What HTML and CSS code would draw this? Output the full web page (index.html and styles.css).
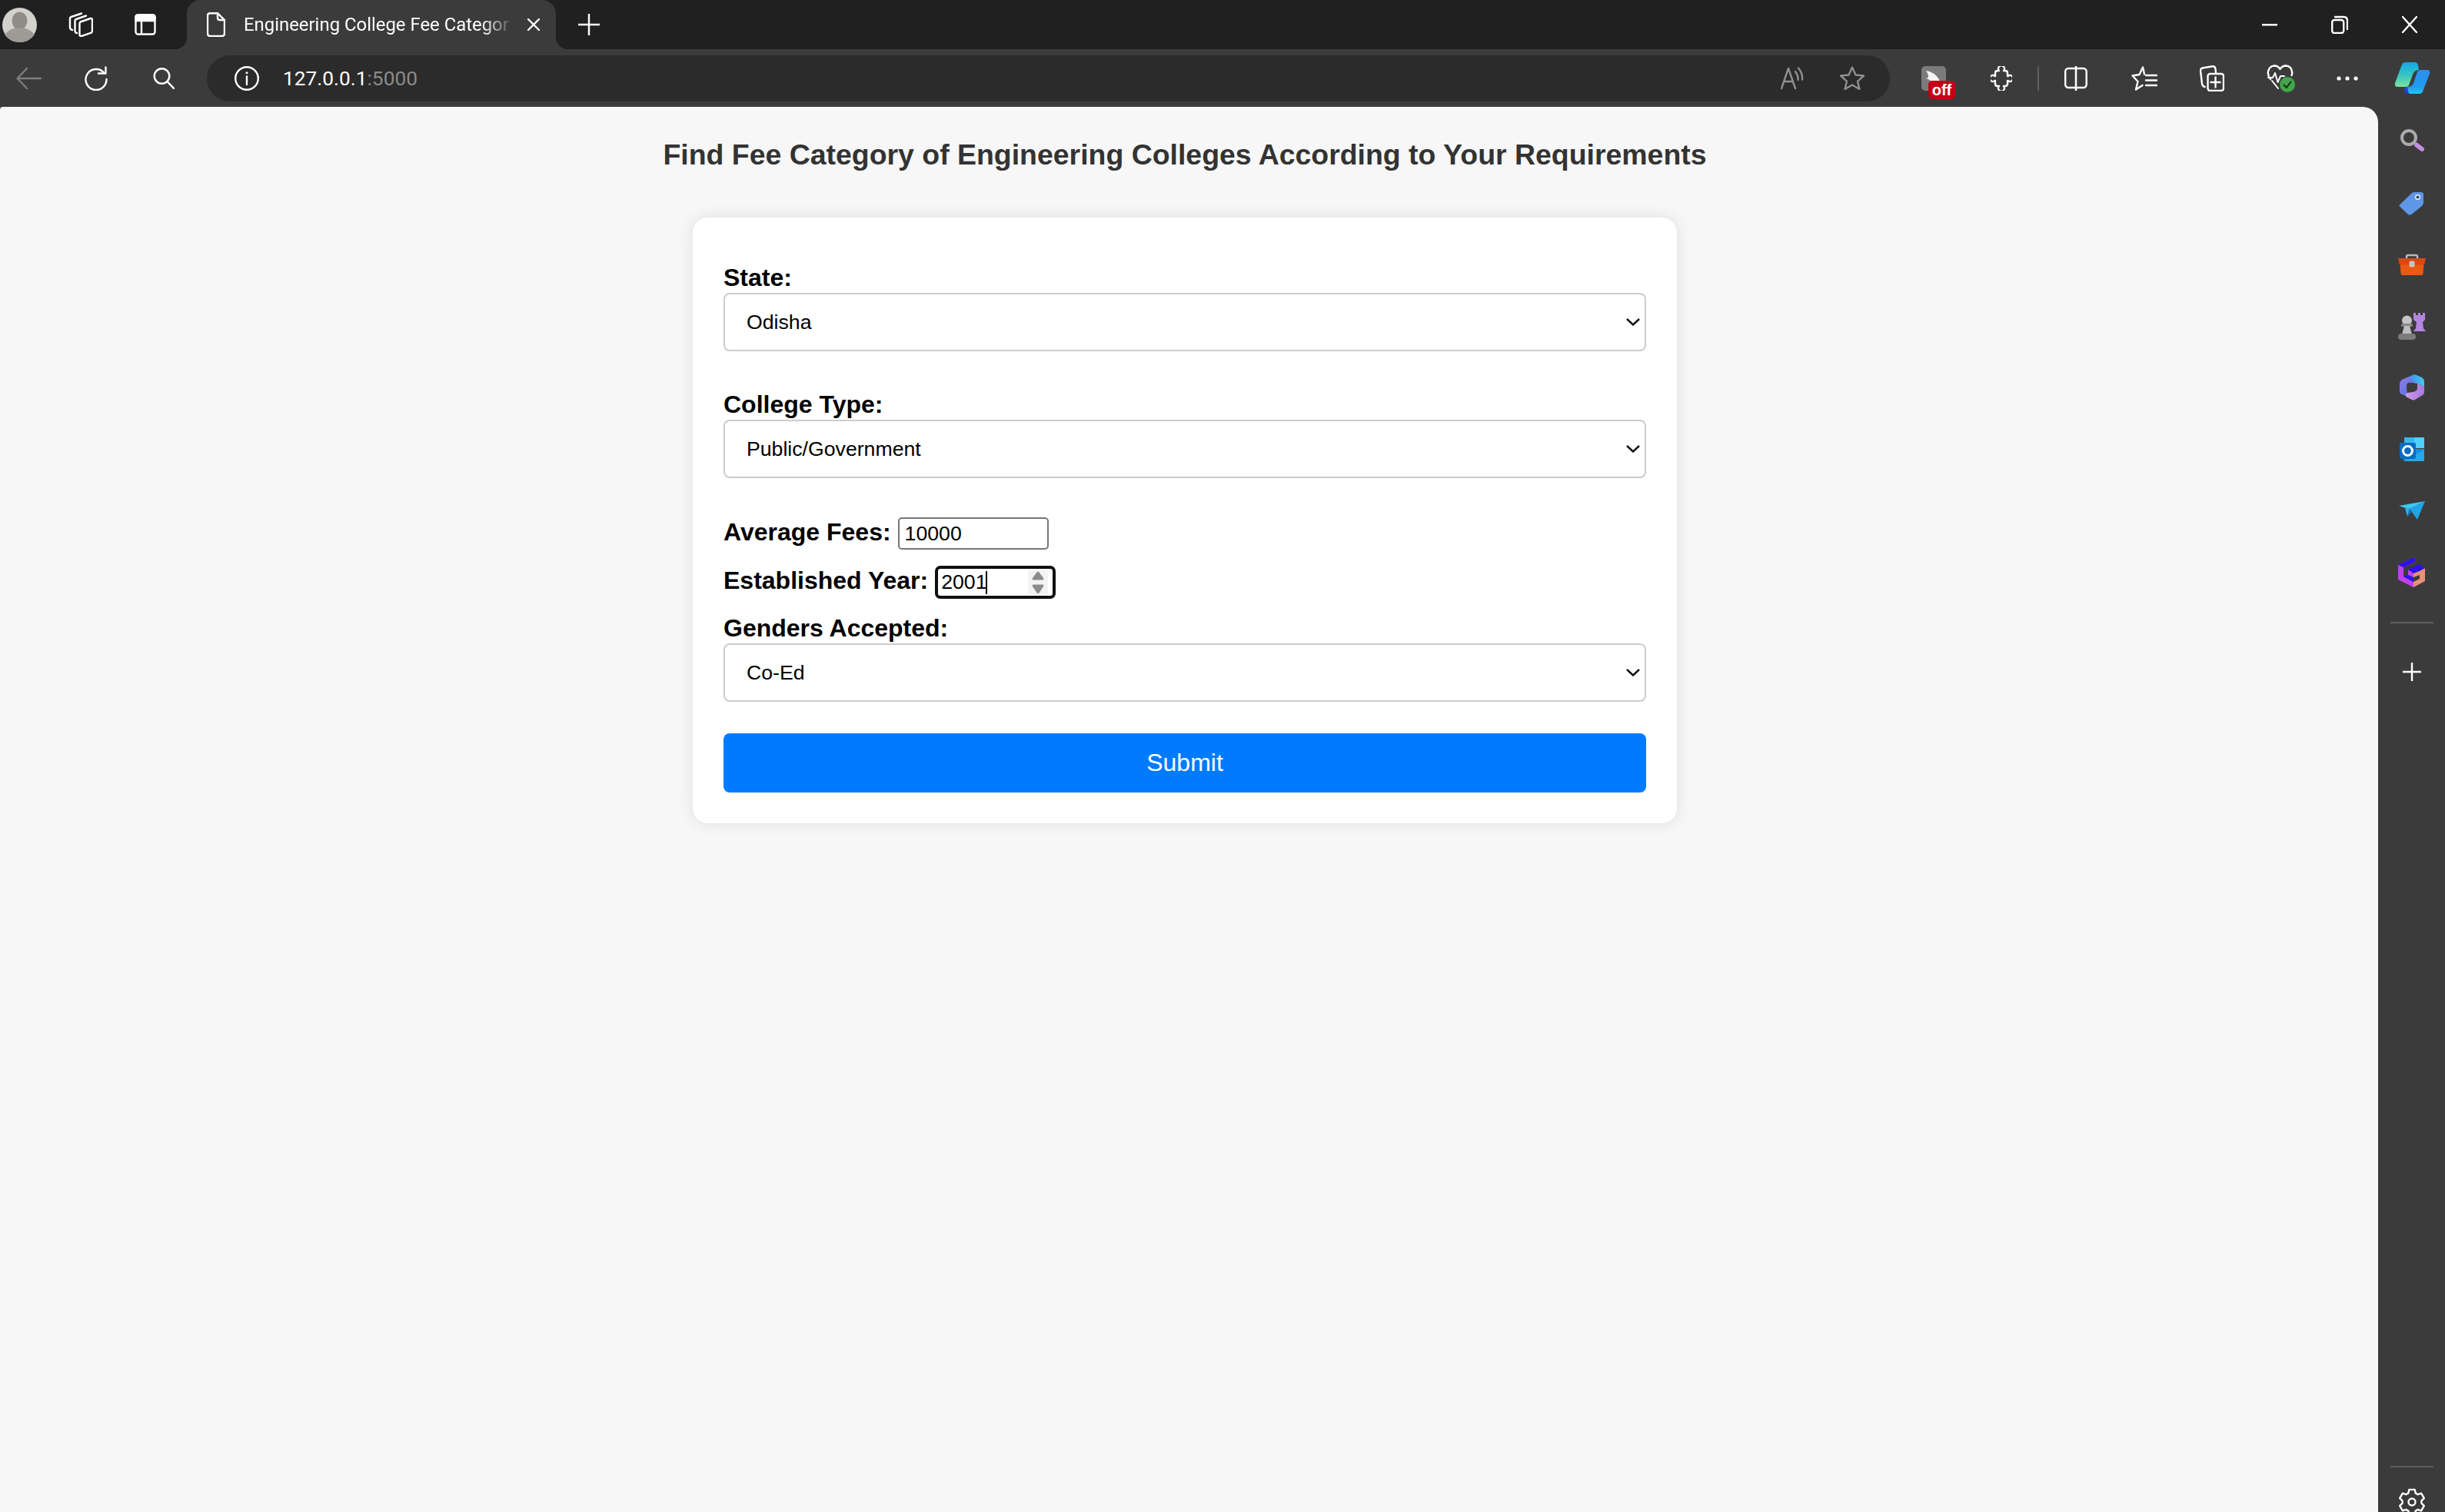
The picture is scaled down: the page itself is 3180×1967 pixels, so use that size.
FILE: index.html
```html
<!DOCTYPE html>
<html lang="en">
<head>
    <meta charset="UTF-8">
    <meta name="viewport" content="width=device-width, initial-scale=1.0">
    <title>Engineering College Fee Category</title>
    <link rel="stylesheet" href="styles.css">
</head>
<body>
    <div class="tabstrip">
        <div class="strip-btn avatar-btn">
            <svg width="45" height="45" viewBox="0 0 45 45"><circle cx="22.5" cy="22.5" r="22.5" fill="#d2d1cc"/><ellipse cx="22.5" cy="17" rx="10" ry="11.5" fill="#8e8c87"/><path d="M3 35 Q10 26 22.5 26 Q35 26 42 35 Q35 45 22.5 45 Q10 45 3 35Z" fill="#9d9b96"/></svg>
        </div>
        <div class="strip-btn collections-btn">
            <svg width="32" height="32" viewBox="0 0 32 32" class="line-icon"><path d="M15.5 12.5 L28.5 8 Q31 7.5 31 10 V24 Q31 26 29 26.8 L17 31 Q14.5 31.5 14.5 29 V15 Q14.5 13 15.5 12.5Z"/><path d="M11 27 Q8.5 26.5 8.5 24 V11 Q8.5 9.5 10 9 L23 4.5"/><path d="M5 23 Q2 22 2 20 V8 Q2 6.5 3.5 6 L17 1.5"/></svg>
        </div>
        <div class="strip-btn panel-btn">
            <svg width="28" height="28" viewBox="0 0 28 28" class="line-icon"><rect x="1.5" y="1.5" width="25" height="25" rx="3"/><path d="M1.5 4.5 Q1.5 1.5 4.5 1.5 H23.5 Q26.500 1.5 26.5 4.5 V9 H1.5Z" fill="#fff"/><path d="M9 9 V26"/></svg>
        </div>
        <div class="tab">
            <svg width="24" height="32" viewBox="0 0 24 32" class="line-icon tab-doc"><path d="M4 1.200 H14 L23 10 V27.500 Q23 31 19.500 31 H4.500 Q1 31 1 27.500 V4.500 Q1 1.200 4 1.200Z"/><path d="M14 1.200 V7 Q14 10 17 10 H23"/></svg>
            <span class="tab-title">Engineering College Fee Categor</span>
            <svg width="16" height="16" viewBox="0 0 16 16" class="line-icon tab-close"><path d="M1 1 L15 15 M15 1 L1 15"/></svg>
        </div>
        <div class="strip-btn newtab-btn">
            <svg width="28" height="28" viewBox="0 0 28 28" class="line-icon"><path d="M14 0 V28 M0 14 H28"/></svg>
        </div>
        <div class="caption-btns">
            <div class="strip-btn"><svg width="20" height="4" viewBox="0 0 20 4"><rect width="20" height="2.500" y="1" fill="#fff"/></svg></div>
            <div class="strip-btn"><svg width="22" height="24" viewBox="0 0 22 24" class="line-icon"><rect x="1.200" y="6" width="15" height="17" rx="3"/><path d="M5 2 H16 Q21 2 21 7 V18"/></svg></div>
            <div class="strip-btn"><svg width="20" height="22" viewBox="0 0 20 22" class="line-icon"><path d="M1 1 L19 21 M19 1 L1 21"/></svg></div>
        </div>
    </div>

    <div class="toolbar">
        <div class="nav-btn">
            <svg width="33" height="28" viewBox="0 0 33 28" class="line-icon dim"><path d="M32 14 H2 M14 1 L1.500 14 L14 27"/></svg>
        </div>
        <div class="nav-btn">
            <svg width="30" height="32" viewBox="0 0 30 32" class="line-icon"><path d="M25.500 9 A13.500 13.500 0 1 0 28.500 17"/><path d="M27.500 1.500 V9.500 H18"/></svg>
        </div>
        <div class="nav-btn">
            <svg width="28" height="28" viewBox="0 0 28 28" class="line-icon"><circle cx="11.500" cy="11" r="9.800"/><path d="M18.500 18 L27.500 27.500"/></svg>
        </div>
        <div class="address-bar">
            <svg width="32" height="32" viewBox="0 0 32 32" class="line-icon"><circle cx="16" cy="16" r="14.800"/><path d="M16 13.500 V24"/><circle cx="16" cy="8.800" r="1.500" fill="#fff" stroke="none"/></svg>
            <span class="url">127.0.0.1<span class="url-port">:5000</span></span>
            <svg width="30" height="30" viewBox="0 0 30 30" class="line-icon gray read-aloud"><path d="M1 28 L10 2 L19 28 M4.500 19 H15.500"/><path d="M19 6 Q23 11 22.500 17 M23 1.500 Q29 9 28 16.500"/></svg>
            <svg width="32" height="31" viewBox="0 0 32 31" class="line-icon gray star"><path d="M16 1.500 L20.500 11.500 L31 12.500 L23 19.800 L25.500 30 L16 24.500 L6.500 30 L9 19.800 L1 12.500 L11.500 11.500Z"/></svg>
        </div>
        <div class="tools">
            <div class="tool ext-off">
                <svg width="32" height="32" viewBox="0 0 32 32"><rect width="32" height="32" rx="5" fill="#7b7b7b"/><path d="M6 6 Q22 8 27 28 L15 28 Q15 18 6 16 Q12 15 6 6Z" fill="#f4f4f4"/></svg>
                <span class="off-badge">off</span>
            </div>
            <div class="tool">
                <svg width="28" height="32" viewBox="0 0 28 32" class="line-icon"><path d="M9 6 H11 A4 4 0 1 1 17 6 H19 Q22 6 22 9 V13 H22.500 A4 4 0 1 1 22.500 19 H22 V23 Q22 26 19 26 H17 A4 4 0 1 1 11 26 H9 Q6 26 6 23 V19 H5.500 A4 4 0 1 1 5.500 13 H6 V9 Q6 6 9 6Z"/></svg>
            </div>
            <div class="tool"><span class="tool-divider"></span></div>
            <div class="tool">
                <svg width="30" height="32" viewBox="0 0 30 32" class="line-icon"><rect x="1.200" y="3" width="27.500" height="25" rx="4"/><path d="M15 0 V32" stroke-width="2.500"/></svg>
            </div>
            <div class="tool">
                <svg width="34" height="32" viewBox="0 0 34 32" class="line-icon"><path d="M17 10.500 L15 1.500 L10.500 11 L1.500 12.500 L8.500 20 L6 30.500 L14.500 25"/><path d="M19 12 H33 M19 18.500 H33 M19 25 H33"/></svg>
            </div>
            <div class="tool">
                <svg width="32" height="34" viewBox="0 0 32 34" class="line-icon"><rect x="10.500" y="11" width="20.500" height="22" rx="3"/><path d="M20.500 15.500 V28.500 M14.500 22 H26.500"/><path d="M6.500 28 Q3.500 27 3 24 L1 7 Q1 4 3.500 3.500 L17 1.200 Q20 1 20.500 5 L21 10"/></svg>
            </div>
            <div class="tool">
                <svg width="38" height="38" viewBox="0 0 38 38" class="line-icon"><path d="M5 20 Q1 15 2 10 Q3.500 3 10 2.500 Q15 2.500 17.500 7 Q20 2.500 25 2.500 Q32 3 33 10 Q33.500 13 32.500 15"/><path d="M2 18 H8 L11 12 L14.500 24 L18 16 H23" stroke-width="2"/><path d="M7 22 L15 32" stroke-width="2"/><circle cx="27" cy="27" r="10" fill="#43a64a" stroke="none"/><path d="M22.500 27.500 L25.800 31 L31.500 23.500" stroke="#1b3a1c" stroke-width="2.200"/></svg>
            </div>
            <div class="tool">
                <svg width="28" height="6" viewBox="0 0 28 6"><circle cx="3" cy="3" r="2.600" fill="#fff"/><circle cx="14" cy="3" r="2.600" fill="#fff"/><circle cx="25" cy="3" r="2.600" fill="#fff"/></svg>
            </div>
            <div class="tool">
                <svg width="47" height="43" viewBox="0 0 47 43">
                    <defs>
                        <linearGradient id="copLeft" x1="0" y1="0" x2="0" y2="1"><stop offset="0" stop-color="#12a8e8"/><stop offset="0.55" stop-color="#38c7c0"/><stop offset="1" stop-color="#7fe29a"/></linearGradient>
                        <linearGradient id="copRight" x1="0" y1="0" x2="0" y2="1"><stop offset="0" stop-color="#2f8ff0"/><stop offset="0.7" stop-color="#1e9bf0"/><stop offset="1" stop-color="#24c8f0"/></linearGradient>
                    </defs>
                    <path d="M10 4 Q11 1 14.500 1 H27 Q30 1 31 5 L32 11 Q26 11 24 17 L19 31 Q18 33 15 33 H4.500 Q0 33 1 28Z" fill="url(#copLeft)"/>
                    <path d="M13 33 H20 L23 42 H16 Q13.500 42 13 39Z" fill="#2440c8"/>
                    <path d="M37 39 Q36 42 32.500 42 H22 Q18 42 18 38 L17 33 Q23 33 25 28 L29.500 15 Q30.500 11 34 11 H43 Q47 11 46 16Z" fill="url(#copRight)"/>
                </svg>
            </div>
        </div>
    </div>

    <div class="window-body">
        <main class="page">
            <h1 class="page-title">Find Fee Category of Engineering Colleges According to Your Requirements</h1>
            <form class="fee-form">
                <div class="field field-state">
                    <label class="field-label" for="state">State:</label>
                    <div class="select-wrap">
                        <select id="state" class="field-select"><option>Odisha</option></select>
                        <svg class="chevron" width="18" height="10" viewBox="0 0 18 10"><path d="M1 1 L9 8.500 L17 1"/></svg>
                    </div>
                </div>
                <div class="field field-type">
                    <label class="field-label" for="type">College Type:</label>
                    <div class="select-wrap">
                        <select id="type" class="field-select"><option>Public/Government</option></select>
                        <svg class="chevron" width="18" height="10" viewBox="0 0 18 10"><path d="M1 1 L9 8.500 L17 1"/></svg>
                    </div>
                </div>
                <div class="inline-row row-fees">
                    <label class="field-label" for="fees">Average Fees:</label>
                    <input id="fees" class="fees-input" type="text" value="10000">
                </div>
                <div class="inline-row row-year">
                    <label class="field-label" for="year">Established Year:</label>
                    <div class="year-box">
                        <input id="year" class="year-input" type="text" value="2001">
                        <span class="caret"></span>
                        <svg class="spinner" width="26" height="31" viewBox="0 0 26 31"><rect width="26" height="31" fill="#f3f3f3"/><path d="M13 1.500 Q14 1.500 15 3 L20 10 Q21 12.500 19 12.500 H7 Q5 12.500 6 10 L11 3 Q12 1.500 13 1.500Z" fill="#8c8c8c"/><path d="M13 30 Q14 30 15 28.500 L20 21 Q21 18.500 19 18.500 H7 Q5 18.500 6 21 L11 28.500 Q12 30 13 30Z" fill="#8c8c8c"/></svg>
                    </div>
                </div>
                <div class="field field-gender">
                    <label class="field-label" for="gender">Genders Accepted:</label>
                    <div class="select-wrap">
                        <select id="gender" class="field-select"><option>Co-Ed</option></select>
                        <svg class="chevron" width="18" height="10" viewBox="0 0 18 10"><path d="M1 1 L9 8.500 L17 1"/></svg>
                    </div>
                </div>
                <button class="submit-btn" type="button">Submit</button>
            </form>
        </main>

        <aside class="sidebar">
            <div class="side-item">
                <svg width="32" height="31" viewBox="0 0 32 31"><circle cx="12" cy="11" r="9" fill="none" stroke="#acacac" stroke-width="4"/><path d="M22 20.500 L29 26" stroke="#c48de0" stroke-width="6" stroke-linecap="round"/></svg>
            </div>
            <div class="side-item">
                <svg width="33" height="33" viewBox="0 0 33 33"><path d="M1 18.500 L16 4 Q18 2 20 2 H29 Q32 2 32 5 V15 Q32 18 30 20 L17 30.500 Q14.500 32.500 12 31 L1.500 21 Q0 19.800 1 18.500Z" fill="#5e97e8"/><circle cx="24.500" cy="8.500" r="3.500" fill="#e6eefb"/><circle cx="24.500" cy="8.500" r="2" fill="#33415c"/></svg>
            </div>
            <div class="side-item">
                <svg width="36" height="28" viewBox="0 0 36 28"><path d="M11 9 V4 Q11 2 13 2 H23 Q25 2 25 4 V9" fill="none" stroke="#b9b9b9" stroke-width="2.500"/><path d="M2.500 12 H33.500 L32.500 26 Q32.500 28 30 28 H6 Q3.500 28 3.500 26Z" fill="#ec5a12"/><path d="M0 6 H36 L34.500 13 Q34 14.500 32 14.500 H4 Q2 14.500 1.500 13Z" fill="#d9480f"/><rect x="14.500" y="9.500" width="7" height="8" rx="2" fill="#c9c3bd"/></svg>
            </div>
            <div class="side-item">
                <svg width="36" height="36" viewBox="0 0 36 36"><path d="M20 1 H23 V4 H26 V1 H29 V4 H32 V1 H35 V10 L32 13 L33 21 L36 25 H20 L23 21 L24 13 L20 10Z" fill="#b286e0"/><circle cx="11.500" cy="11" r="6.500" fill="#c4c4c4"/><rect x="4" y="15" width="15" height="4" rx="2" fill="#8a8a8a"/><path d="M8 18 H15 L18 29 H5Z" fill="#bdbdbd"/><rect x="0" y="28" width="23" height="8" rx="4" fill="#7c7c7c"/></svg>
            </div>
            <div class="side-item">
                <svg width="32" height="34" viewBox="0 0 32 34">
                    <defs>
                        <linearGradient id="offA" x1="0" y1="0" x2="1" y2="1"><stop offset="0" stop-color="#9a78e6"/><stop offset="1" stop-color="#3f78e0"/></linearGradient>
                        <linearGradient id="offB" x1="0" y1="0" x2="1" y2="0"><stop offset="0" stop-color="#3f8fe6"/><stop offset="1" stop-color="#45c8ee"/></linearGradient>
                        <linearGradient id="offC" x1="0" y1="0" x2="1" y2="0"><stop offset="0" stop-color="#d09ae8"/><stop offset="1" stop-color="#a678e0"/></linearGradient>
                    </defs>
                    <path d="M12 3 L18 0.500 Q20 0 22 1 L29 4 Q32 6 32 9 V16 L23 12 L13 10.500Z" fill="url(#offB)"/>
                    <path d="M12 3 L3 7 Q0 9 0 12 V22 Q0 25 3 26 L10 29 L9 15 Q9 11 13 10.500 L21 11Z" fill="url(#offA)"/>
                    <path d="M32 16 V23 Q32 26 29 27.500 L20 33 Q18 34 16 33 L9 29.500 Q6 26 10 24 L17 23 Q22 22 23 19 V12Z" fill="url(#offC)"/>
                </svg>
            </div>
            <div class="side-item">
                <svg width="32" height="31" viewBox="0 0 32 31">
                    <rect x="6" y="0" width="26" height="14" fill="#36b8f0"/>
                    <rect x="19" y="0" width="13" height="14" fill="#4fd0ff"/>
                    <path d="M5 15 H32 V29 Q32 31 30 31 H7 Q5 31 5 29Z" fill="#1490df"/>
                    <path d="M5 31 L32 16 V29 Q32 31 30 31Z" fill="#28a8ea"/>
                    <rect x="0" y="7" width="21" height="21" rx="2" fill="#0a6cc0"/>
                    <circle cx="10.500" cy="17.500" r="6" fill="none" stroke="#fff" stroke-width="3"/>
                </svg>
            </div>
            <div class="side-item">
                <svg width="34" height="24" viewBox="0 0 34 24"><path d="M0 6 L34 0 L14 10Z" fill="#3fc8f4"/><path d="M14 10 L34 0 L24 24Z" fill="#1ea4e8"/><path d="M14 10 L11 20 L17 14Z" fill="#0f6fb8"/><path d="M0 6 L14 10 L11 20 L8 9Z" fill="#27b3ee"/></svg>
            </div>
            <div class="side-item">
                <svg width="35" height="39" viewBox="0 0 35 39"><path d="M0 10 L21 0 L23 5 L7 13 V25 L20 32 V39 L0 29Z" fill="#c040f0"/><path d="M7 13 L0 10 L21 0 L23 5Z" fill="#2a10f0"/><path d="M20 32 L28 28 V18 L35 14 V31 L20 39Z" fill="#e89078"/><path d="M13 16 L27 9 L35 14 L20 21Z" fill="#2a10f0"/><path d="M13 16 L20 21 V26 L13 23Z" fill="#c040f0"/><path d="M20 21 L28 18 V23 L20 26Z" fill="#e89078"/><path d="M7 25 L13 23 L20 27 L20 32Z" fill="#2a10f0"/></svg>
            </div>
            <span class="side-divider"></span>
            <div class="side-add">
                <svg width="24" height="24" viewBox="0 0 24 24" class="line-icon"><path d="M12 0 V24 M0 12 H24"/></svg>
            </div>
            <span class="side-divider side-divider-low"></span>
            <div class="side-gear">
                <svg width="36" height="36" viewBox="0 0 36 36" class="line-icon"><polygon points="14.300,1.900 21.700,1.900 22.700,6.400 25.700,8.200 30.100,6.700 33.800,13.200 30.400,16.300 30.400,19.700 33.800,22.800 30.100,29.300 25.700,27.800 22.700,29.600 21.700,34.100 14.300,34.100 13.300,29.600 10.300,27.800 5.900,29.300 2.200,22.800 5.600,19.700 5.600,16.300 2.200,13.200 5.900,6.700 10.300,8.200 13.300,6.400"/><circle cx="18" cy="18" r="4.500"/></svg>
            </div>
        </aside>
    </div>
</body>
</html>
```

FILE: styles.css
```css
/* Global Styles */
html, body {
    height: 100%;
}

body {
    margin: 0;
    display: flex;
    flex-direction: column;
    overflow: hidden;
    background-color: #3b3b3b;
    font-family: 'Liberation Sans', Arial, sans-serif;
    color: #000;
}

.line-icon {
    fill: none;
    stroke: #fff;
    stroke-width: 2.4;
    stroke-linecap: round;
    stroke-linejoin: round;
}

.line-icon.dim {
    stroke: #7d7d7d;
}

.line-icon.gray {
    stroke: #8f8f8f;
}

/* Tab Strip */
.tabstrip {
    height: 64px;
    flex: none;
    display: flex;
    align-items: center;
    background-color: #202020;
}

.strip-btn {
    width: 50px;
    height: 64px;
    display: flex;
    align-items: center;
    justify-content: center;
    flex: none;
}

.collections-btn {
    margin-left: 30px;
}

.panel-btn {
    margin-left: 34px;
}

.tab {
    position: relative;
    width: 480px;
    height: 64px;
    margin-left: 29px;
    box-sizing: border-box;
    padding-left: 26px;
    display: flex;
    align-items: center;
    background-color: #3b3b3b;
    border-radius: 18px 18px 0 0;
}

.tab::before,
.tab::after {
    content: "";
    position: absolute;
    bottom: 0;
    width: 16px;
    height: 16px;
}

.tab::before {
    left: -16px;
    background: radial-gradient(circle at 0 0, transparent 16px, #3b3b3b 16.5px);
}

.tab::after {
    right: -16px;
    background: radial-gradient(circle at 100% 0, transparent 16px, #3b3b3b 16.5px);
}

.tab-title {
    width: 352px;
    margin-left: 24px;
    overflow: hidden;
    white-space: nowrap;
    font-family: Roboto, sans-serif;
    font-size: 23.9px;
    color: #fff;
    -webkit-mask-image: linear-gradient(to right, #000 88%, transparent 100%);
    mask-image: linear-gradient(to right, #000 88%, transparent 100%);
}

.tab-close {
    margin-left: 17px;
}

.newtab-btn {
    margin-left: 18px;
}

.caption-btns {
    margin-left: auto;
    padding-right: 21px;
    display: flex;
    gap: 41px;
}

/* Toolbar */
.toolbar {
    height: 75px;
    flex: none;
    display: flex;
    align-items: center;
    padding-left: 12px;
    gap: 38px;
    background-color: #3b3b3b;
}

.nav-btn {
    width: 50px;
    display: flex;
    justify-content: center;
    flex: none;
}

.address-bar {
    flex: 1;
    height: 60px;
    margin-left: -7px;
    margin-right: -18px;
    box-sizing: border-box;
    padding: 0 33px 0 36px;
    display: flex;
    align-items: center;
    background-color: #2b2b2b;
    border-radius: 30px;
}

.url {
    margin-left: 31px;
    font-family: Roboto, sans-serif;
    font-size: 26.3px;
    color: #fff;
}

.url-port {
    color: #8a8a8a;
}

.read-aloud {
    margin-left: auto;
}

.star {
    margin-left: 47px;
}

.tools {
    flex: none;
    height: 75px;
    display: grid;
    grid-template-columns: 80px 90px 6px 92px 86px 90px 90px 82px 86px;
    align-items: center;
    justify-items: center;
}

.tool {
    display: flex;
    align-items: center;
    justify-content: center;
}

.ext-off {
    position: relative;
    margin-left: -6px;
}

.off-badge {
    position: absolute;
    left: 9px;
    top: 19px;
    width: 35px;
    height: 24px;
    background-color: #c30018;
    border-radius: 5px;
    color: #fff;
    font-size: 20px;
    font-weight: bold;
    line-height: 24px;
    text-align: center;
}

.tool-divider {
    display: block;
    width: 2px;
    height: 32px;
    background-color: #5e5e5e;
}

/* Page Area */
.window-body {
    flex: 1;
    min-height: 0;
    display: flex;
}

.page {
    flex: 1;
    box-sizing: border-box;
    padding-right: 11px;
    display: flex;
    flex-direction: column;
    align-items: center;
    background-color: #f7f7f7;
    border-radius: 4px 20px 0 0;
}

.page-title {
    margin: 42px 0 61px;
    font-size: 37.44px;
    line-height: 41px;
    font-weight: bold;
    color: #333;
}

/* Form Styling */
.fee-form {
    width: 1280px;
    box-sizing: border-box;
    padding: 40px;
    background-color: #fff;
    border-radius: 20px;
    box-shadow: 0 0 20px rgba(0, 0, 0, 0.1);
}

.field-label {
    display: block;
    font-size: 32px;
    line-height: 37px;
    font-weight: bold;
    white-space: nowrap;
}

.field .field-label {
    margin-bottom: 1px;
}

.field-state {
    margin-top: 20px;
}

.field-type {
    margin-top: 51px;
}

.field-gender {
    margin-top: 20px;
}

.select-wrap {
    position: relative;
}

.field-select {
    display: block;
    width: 100%;
    height: 76px;
    box-sizing: border-box;
    padding: 0 28px;
    border: 2px solid #ccc;
    border-radius: 8px;
    background-color: #fff;
    font-family: 'Liberation Sans', Arial, sans-serif;
    font-size: 26.67px;
    color: #000;
    -webkit-appearance: none;
    appearance: none;
}

.chevron {
    position: absolute;
    right: 8px;
    top: 33px;
    fill: none;
    stroke: #111;
    stroke-width: 2.4;
}

.inline-row {
    display: flex;
    align-items: baseline;
    gap: 9px;
}

.row-fees {
    margin-top: 51px;
}

.row-year {
    margin-top: 21px;
}

.fees-input {
    width: 196px;
    height: 42px;
    box-sizing: border-box;
    padding: 0 7px;
    border: 2px solid #767676;
    border-radius: 5px;
    font-family: 'Liberation Sans', Arial, sans-serif;
    font-size: 26.67px;
    color: #000;
}

.year-box {
    width: 157px;
    height: 43px;
    box-sizing: border-box;
    padding: 0 6px 0 4px;
    display: flex;
    align-items: center;
    background-color: #fff;
    border: 4px solid #101010;
    border-radius: 7px;
}

.year-input {
    width: 58px;
    padding: 0;
    border: none;
    outline: none;
    font-family: 'Liberation Sans', Arial, sans-serif;
    font-size: 26.67px;
    color: #000;
}

.caret {
    width: 2px;
    height: 30px;
    background-color: #000;
}

.spinner {
    margin-left: auto;
}

.submit-btn {
    display: block;
    width: 100%;
    height: 77px;
    margin-top: 41px;
    border: none;
    border-radius: 8px;
    background-color: #007bff;
    font-family: 'Liberation Sans', Arial, sans-serif;
    font-size: 32px;
    color: #fff;
}

/* Sidebar */
.sidebar {
    width: 87px;
    flex: none;
    padding-top: 3px;
    display: flex;
    flex-direction: column;
    align-items: center;
    overflow: hidden;
    background-color: #3b3b3b;
}

.side-item {
    height: 80px;
    flex: none;
    display: flex;
    align-items: center;
    justify-content: center;
}

.side-item:first-child {
    height: 82px;
}

.side-divider {
    width: 56px;
    height: 2px;
    flex: none;
    margin-top: 25px;
    background-color: #5e5e5e;
}

.side-add {
    height: 24px;
    flex: none;
    margin-top: 51px;
}

.side-divider-low {
    margin-top: auto;
}

.side-gear {
    height: 36px;
    flex: none;
    margin-top: 27px;
    margin-bottom: -5px;
}
```
